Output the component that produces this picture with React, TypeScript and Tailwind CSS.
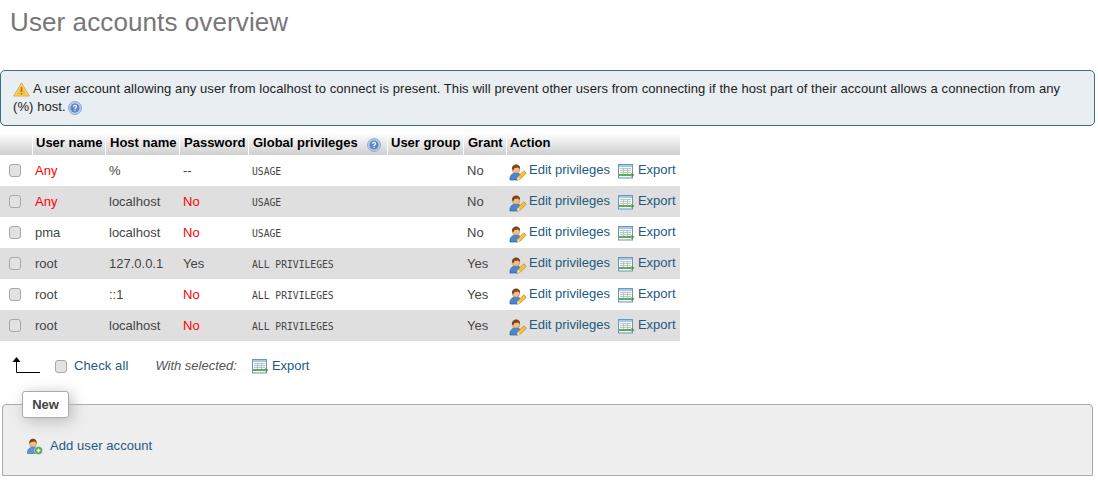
import React from "react";

const font = "font-['Liberation_Sans',Arial,sans-serif]";

const UserEditIcon = () => (
  <svg width="18" height="17" viewBox="0 0 18 17" className="shrink-0">
    <path d="M1 16c-.5-3.500 1.500-6.500 4-6.500h4c2 0 3 2 3 3.500l-3 3z" fill="#4a86d4" stroke="#2c5f9e" strokeWidth="0.7" />
    <circle cx="7" cy="5.500" r="3.700" fill="#f0bd8c" stroke="#a9713f" strokeWidth="0.5" />
    <path d="M3 5.500C2.500 2 5 .4 7.200 .4s4.300 1.500 3.800 4.700L9 3.500 5.500 4 4.500 6z" fill="#7f4518" />
    <path d="M8 16l.8-3.200 6-6 2.400 2.400-6 6z" fill="#f4c33f" stroke="#b5801b" strokeWidth="0.7" />
    <path d="M8 16l.8-3.200 2.400 2.400z" fill="#f9e6c0" />
  </svg>
);

const ExportIcon = () => (
  <svg width="17" height="15" viewBox="0 0 17 15" className="shrink-0">
    <rect x="0.500" y="0.500" width="14" height="13.500" fill="#f2f6f8" stroke="#6b97bd" />
    <path d="M1 1h13v2H1z" fill="#a9c7e0" />
    <path d="M2 4.500h11M2 6.500h11M2 8.500h11M5.500 4v6M9.500 4v6" stroke="#a8c0b8" strokeWidth="0.8" />
    <path d="M1 11h12.500" stroke="#46922f" strokeWidth="1.600" />
    <path d="M13.500 9l3 2-3 2z" fill="#46922f" />
  </svg>
);

const HelpIcon = () => (
  <svg width="14" height="14" viewBox="0 0 14 14" className="shrink-0">
    <circle cx="7" cy="7" r="6.500" fill="#b7cbe6" stroke="#93add3" />
    <circle cx="7" cy="7" r="4.500" fill="#5b88c8" />
    <path d="M5.400 5.800C5.500 4.800 6.200 4.400 7 4.400c1 0 1.600.6 1.600 1.300 0 1-1.600 1.200-1.600 2.300" fill="none" stroke="#fff" strokeWidth="1.200" />
    <rect x="6.400" y="8.700" width="1.200" height="1.200" fill="#fff" />
  </svg>
);

const WarnIcon = () => (
  <svg width="17" height="15" viewBox="0 0 17 15" className="shrink-0">
    <path d="M8.500 .8L16.300 14H.7z" fill="#fbd66a" stroke="#d3ac5a" strokeLinejoin="round" />
    <path d="M8.500 3.500L13.500 12.500H3.500z" fill="#f6bd3a" />
    <rect x="7.700" y="5" width="1.600" height="5" fill="#a87b20" />
    <rect x="7.700" y="11" width="1.600" height="1.500" fill="#a87b20" />
  </svg>
);

const AddUserIcon = () => (
  <svg width="16" height="17" viewBox="0 0 16 17" className="shrink-0">
    <path d="M0.500 15.500c-.3-3.500 1.700-6 4-6h3.500c2 0 3.500 2.500 3.500 6z" fill="#5b96dc" stroke="#2f659f" strokeWidth="0.600" />
    <circle cx="6" cy="5.500" r="3.500" fill="#f0bd8c" stroke="#a9713f" strokeWidth="0.500" />
    <path d="M2.400 5.500C2 2 4.200 .8 6 .8s4 1.200 3.600 4.700L8 3.500 4.500 4z" fill="#7f4518" />
    <circle cx="11.500" cy="12.500" r="4" fill="#4ca34c" stroke="#d8ead8" strokeWidth="0.600" />
    <path d="M9.500 12.500h4M11.500 10.500v4" stroke="#fff" strokeWidth="1.500" />
  </svg>
);

const Checkbox = () => (
  <span className="block w-[12px] h-[13px] rounded-[3px] border border-[#a8a8a8] bg-[#e2e2e2]"></span>
);

const rows = [
  { user: "Any", anon: true, host: "%", password: "--", priv: "USAGE", grant: "No" },
  { user: "Any", anon: true, host: "localhost", password: "No", priv: "USAGE", grant: "No" },
  { user: "pma", anon: false, host: "localhost", password: "No", priv: "USAGE", grant: "No" },
  { user: "root", anon: false, host: "127.0.0.1", password: "Yes", priv: "ALL PRIVILEGES", grant: "Yes" },
  { user: "root", anon: false, host: "::1", password: "No", priv: "ALL PRIVILEGES", grant: "Yes" },
  { user: "root", anon: false, host: "localhost", password: "No", priv: "ALL PRIVILEGES", grant: "Yes" },
];

const headers = [
  { label: "", w: "w-[33px] pl-[3px]" },
  { label: "User name", w: "w-[73px] pl-[3px]" },
  { label: "Host name", w: "w-[74px] pl-[4px]" },
  { label: "Password", w: "w-[69px] pl-[4px]" },
  { label: "Global privileges", w: "w-[139px] pl-[4px]", help: true },
  { label: "User group", w: "w-[76px] pl-[3px]" },
  { label: "Grant", w: "w-[43px] pl-[4px]" },
  { label: "Action", w: "w-[173px] pl-[3px]" },
];

const App = () => {
  return (
    <div className={`${font} w-[1098px] h-[481px] overflow-hidden bg-white text-[13px] text-[#444] pt-[5px]`}>
      <h2 className="text-[26px] tracking-[0.1px] leading-[34px] text-[#777] pl-[10px] h-[65px]">User accounts overview</h2>

      <div className="w-[1095px] h-[56px] border border-[#3b6f85] rounded-[5px] bg-[#e8eef1] pl-[12px] pr-[20px] pt-[9px] leading-[18px] text-[#222] tracking-[0.08px]">
        <p>
          <span className="inline-block align-[-4px] mr-[3px]"><WarnIcon /></span>
          A user account allowing any user from localhost to connect is present. This will prevent other users from connecting if the host part of their account allows a connection from any (%) host.{" "}
          <span className="inline-block align-[-4px] -ml-[1px]"><HelpIcon /></span>
        </p>
      </div>

      <div className="w-[680px] mt-[7px]">
        <div className="flex h-[22px] bg-gradient-to-b from-white to-[#cfcfcf] font-bold text-black">
          {headers.map((h, i) => (
            <div key={i} className={`${h.w} flex items-center gap-[8px] pb-[2px] border-r border-white last:border-r-0`}>
              {h.label}
              {h.help && <span className="ml-[1px] mt-[3px]"><HelpIcon /></span>}
            </div>
          ))}
        </div>
        {rows.map((r, i) => (
          <div key={i} className={`flex h-[31px] items-center ${i % 2 === 1 ? "bg-[#dfdfdf]" : "bg-white"}`}>
            <div className="w-[33px] pl-[9px] flex items-center">
              <Checkbox />
            </div>
            <div className={`w-[73px] pl-[2px] ${r.anon ? "text-[#f00]" : ""}`}>{r.user}</div>
            <div className="w-[74px] pl-[3px]">{r.host}</div>
            <div className={`w-[69px] pl-[3px] ${r.password === "No" ? "text-[#f00]" : ""}`}>{r.password}</div>
            <div className="w-[139px] pl-[3px] font-['DejaVu_Sans_Mono',monospace] text-[9.7px] text-[#444] pt-[4px]">{r.priv}</div>
            <div className="w-[76px]"></div>
            <div className="w-[43px] pl-[3px]">{r.grant}</div>
            <div className="flex items-center text-[#235a81] pl-[2px]">
              <span className="flex items-center gap-[2px] mr-[8px]">
                <span className="mt-[3px]"><UserEditIcon /></span>
                <span className="-mt-[2px]">Edit privileges</span>
              </span>
              <span className="flex items-center gap-[3px]">
                <span className="mt-[1px]"><ExportIcon /></span>
                <span className="-mt-[2px]">Export</span>
              </span>
            </div>
          </div>
        ))}
      </div>

      <div className="flex items-center h-[50px] pl-[12px]">
        <svg width="29" height="18" viewBox="0 0 29 18" className="shrink-0">
          <path d="M4.500 3.500V15.500H28" fill="none" stroke="#000" strokeWidth="1" />
          <path d="M4.500 0L0.500 5H8.500z" fill="#000" />
        </svg>
        <span className="ml-[14px]"><Checkbox /></span>
        <span className="ml-[7px] text-[#235a81] tracking-[0.1px]">Check all</span>
        <span className="ml-[27px] italic text-[#555]">With selected:</span>
        <span className="ml-[15px] flex items-center gap-[3px] text-[#235a81]">
          <span className="mt-[1px]"><ExportIcon /></span>
          <span>Export</span>
        </span>
      </div>

      <div className="relative mt-[13px] ml-[2px] w-[1091px] h-[72px] border border-[#aaa] rounded-t-[4px] bg-[#eee]">
        <div className="absolute left-[19px] -top-[14px] w-[47px] h-[27px] flex items-center justify-center rounded-[3px] border border-[#aaa] bg-white font-bold text-[#444] shadow-[3px_3px_15px_#bbb]">
          New
        </div>
        <div className="flex items-center gap-[7px] pl-[24px] pt-[33px] text-[#235a81] tracking-[0.07px]">
          <AddUserIcon />
          <span className="-mt-[2px]">Add user account</span>
        </div>
      </div>
    </div>
  );
};

export default App;
